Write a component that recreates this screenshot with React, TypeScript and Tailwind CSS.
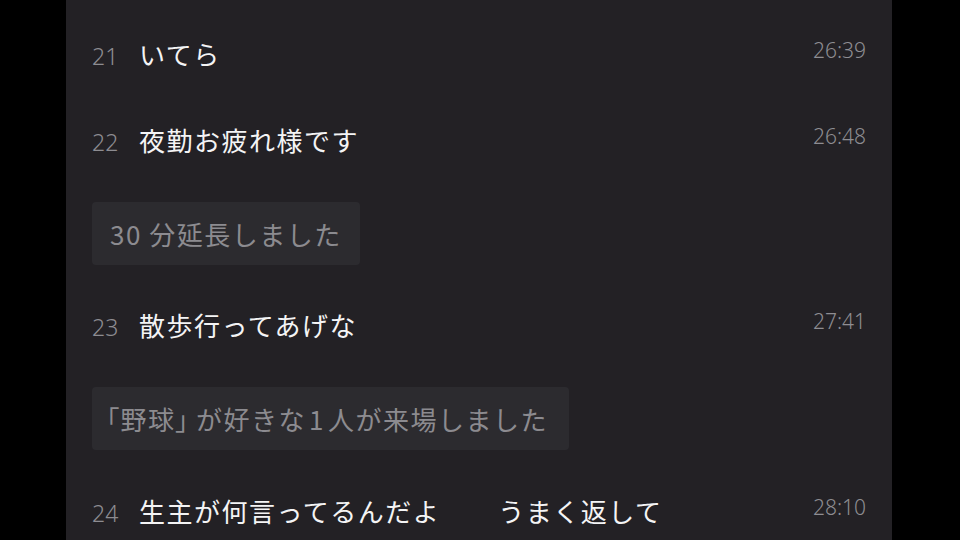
import React from "react";

const jp = { fontFamily: '"Noto Sans CJK JP", "Noto Sans", sans-serif' };
const num = { fontFamily: '"Noto Sans", "Open Sans", sans-serif' };

function Row({ n, text, time, extra }: { n: number; text: string; time: string; extra?: string }) {
  return (
    <div className="flex items-start justify-between h-9">
      <div className="flex items-baseline">
        <span className="w-[47px] text-[23px] leading-9 font-light text-[#8d8c91]" style={num}>
          {n}
        </span>
        <span className="text-[26px] leading-9 tracking-[1.5px] text-[#f4f4f5]" style={jp}>
          {text}
        </span>
        {extra && (
          <span className="ml-[58px] text-[26px] leading-9 tracking-[1.5px] text-[#f4f4f5]" style={jp}>
            {extra}
          </span>
        )}
      </div>
      <span className="text-[21px] leading-7 font-light text-[#8e8d92]" style={num}>
        {time}
      </span>
    </div>
  );
}

function Badge({ children, w }: { children: React.ReactNode; w: string }) {
  return (
    <div className={`flex items-center h-[63px] rounded-[4px] bg-[#2c2b2f] ${w}`}>
      <span className="text-[26px] tracking-[1.5px] text-[#8c8b90] whitespace-nowrap" style={jp}>
        {children}
      </span>
    </div>
  );
}

export default function App() {
  return (
    <div className="w-[960px] h-[540px] bg-black overflow-hidden flex pl-[66px]">
      <div className="w-[826px] h-full bg-[#232125] px-[26px] pt-[36px] flex flex-col">
        <Row n={21} text="いてら" time="26:39" />
        <div className="mt-[50px]">
          <Row n={22} text="夜勤お疲れ様です" time="26:48" />
        </div>
        <div className="mt-[44px] flex">
          <Badge w="w-[268px] px-[18px]">30 分延長しました</Badge>
        </div>
        <div className="mt-[42px]">
          <Row n={23} text="散歩行ってあげな" time="27:41" />
        </div>
        <div className="mt-[44px] flex">
          <Badge w="w-[477px] px-[14px]">
            <span className="[font-feature-settings:'palt']">「</span>野球
            <span className="mr-[6px] [font-feature-settings:'palt']">」</span>が好きな<span className="px-[3px]">1</span>人が来場しました
          </Badge>
        </div>
        <div className="mt-[43px]">
          <Row n={24} text="生主が何言ってるんだよ" extra="うまく返して" time="28:10" />
        </div>
      </div>
    </div>
  );
}
